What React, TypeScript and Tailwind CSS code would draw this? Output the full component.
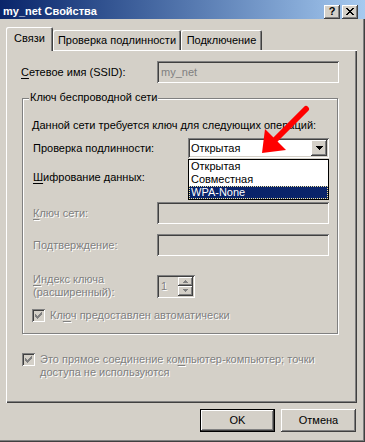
import React from "react";

const raised =
  "shadow-[inset_-1px_-1px_#404040,inset_1px_1px_#fff,inset_-2px_-2px_#808080,inset_2px_2px_#d4d0c8]";
const sunken =
  "shadow-[inset_1px_1px_#808080,inset_-1px_-1px_#fff,inset_2px_2px_#404040,inset_-2px_-2px_#d4d0c8]";
const disabledText = "text-[#808080] [text-shadow:1px_1px_0_#fff]";

function CheckMark({ color }: { color: string }) {
  return (
    <svg width="7" height="7" viewBox="0 0 7 7" shapeRendering="crispEdges">
      <path
        d="M6 0h1v3h-1v1h-1v1h-1v1h-1v1h-1v-1h-1v-1h-1v-3h1v1h1v1h1v-1h1v-1h1z"
        fill={color}
      />
    </svg>
  );
}

function Checkbox() {
  return (
    <div className={`flex h-[13px] w-[13px] shrink-0 items-center justify-center bg-[#d4d0c8] ${sunken}`}>
      <CheckMark color="#808080" />
    </div>
  );
}

function DownArrow({ color = "#000" }: { color?: string }) {
  return (
    <svg width="7" height="4" viewBox="0 0 7 4" shapeRendering="crispEdges">
      <path d="M0 0h7v1h-1v1h-1v1h-1v1h-1v-1h-1v-1h-1v-1h-1z" fill={color} />
    </svg>
  );
}

function Combo({ value }: { value: string }) {
  return (
    <div className={`flex h-[20px] w-[141px] items-center bg-white pl-[3px] pr-[2px] ${sunken}`}>
      <span className="flex-1">{value}</span>
      <div className={`flex h-[16px] w-[16px] items-center justify-center bg-[#d4d0c8] ${raised}`}>
        <DownArrow />
      </div>
    </div>
  );
}

function U({ children }: { children: React.ReactNode }) {
  return <span className="underline decoration-1 underline-offset-[2px]">{children}</span>;
}

export default function App() {
  return (
    <div className="relative h-[442px] w-[365px] overflow-hidden bg-[#d4d0c8] font-['Liberation_Sans',Arial,sans-serif] text-[11px] leading-[13px] text-black shadow-[inset_-1px_-1px_#404040,inset_-2px_-2px_#808080]">
      {/* title bar */}
      <div className="flex h-[19px] items-center bg-gradient-to-r from-[#0a246a] to-[#a6caf0] pl-[3px] pr-[7px] pt-[4px]">
        <span className="flex-1 font-bold text-white">my_net Свойства</span>
        <div className={`flex h-[14px] w-[16px] items-center justify-center bg-[#d4d0c8] font-bold ${raised}`}>
          ?
        </div>
        <div className={`ml-[2px] flex h-[14px] w-[16px] items-center justify-center bg-[#d4d0c8] ${raised}`}>
          <svg width="8" height="7" viewBox="0 0 8 7" shapeRendering="crispEdges">
            <path
              d="M0 0h2v1h1v1h2v-1h1v-1h2v1h-1v1h-1v1h-1v1h1v1h1v1h1v1h-2v-1h-1v-1h-2v1h-1v1h-2v-1h1v-1h1v-1h1v-1h-1v-1h-1v-1h-1z"
              fill="#000"
            />
          </svg>
        </div>
      </div>

      {/* tabs */}
      <div className="ml-[6px] mt-[8px] flex h-[23px] items-end">
        <div className="relative z-10 -mb-[1px] flex h-[24px] w-[47px] items-center justify-center rounded-t-[2px] bg-[#d4d0c8] pb-[2px] shadow-[inset_1px_1px_#fff,inset_-1px_0_#404040,inset_-2px_0_#808080]">
          Связи
        </div>
        <div className="flex h-[20px] w-[128px] items-center justify-center rounded-t-[2px] shadow-[inset_1px_1px_#fff,inset_-1px_0_#404040,inset_-2px_0_#808080]">
          Проверка подлинности
        </div>
        <div className="flex h-[20px] w-[81px] items-center justify-center rounded-t-[2px] shadow-[inset_1px_1px_#fff,inset_-1px_0_#404040,inset_-2px_0_#808080]">
          Подключение
        </div>
      </div>

      {/* tab page */}
      <div className="ml-[6px] flex h-[353px] w-[351px] flex-col pl-[16px] shadow-[inset_1px_1px_#fff,inset_-1px_-1px_#404040,inset_-2px_-2px_#808080]">
        <div className="mt-[11px] flex items-center">
          <span className="-ml-[1px] w-[136px]">
            <U>С</U>етевое имя (SSID):
          </span>
          <div className={`flex h-[22px] w-[182px] items-center bg-[#d4d0c8] pl-[4px] text-[#808080] ${sunken}`}>
            my_net
          </div>
        </div>

        <div className="relative mt-[15px] h-[236px] w-[316px] border border-[#808080] shadow-[1px_1px_0_#fff,inset_1px_1px_0_#fff]">
          <span className="absolute left-[6px] top-[-8px] bg-[#d4d0c8] px-[1px]">Ключ беспроводной сети</span>
          <div className="flex flex-col pl-[10px]">
            <div className="mt-[20px] -ml-[1px] h-[13px]">Данной сети требуется ключ для следующих операций:</div>

            <div className="mt-[6px] flex h-[20px] items-center">
              <span className="w-[155px]">
                Проверка по<U>д</U>линности:
              </span>
              <Combo value="Открытая" />
            </div>

            {/* this combo sits under the open list */}
            <div className="mt-[9px] flex h-[20px] items-center">
              <span className="w-[155px]">
                <U>Ш</U>ифрование данных:
              </span>
              <Combo value="" />
            </div>

            <div className="mt-[15px] flex h-[22px] items-center">
              <span className={`w-[124px] ${disabledText}`}>
                <U>К</U>люч сети:
              </span>
              <div className={`h-[22px] w-[172px] bg-[#d4d0c8] ${sunken}`} />
            </div>

            <div className="mt-[10px] flex h-[22px] items-center">
              <span className={`w-[124px] ${disabledText}`}>
                По<U>д</U>тверждение:
              </span>
              <div className={`h-[22px] w-[172px] bg-[#d4d0c8] ${sunken}`} />
            </div>

            <div className="mt-[17px] flex h-[26px] items-center">
              <span className={`w-[124px] ${disabledText}`}>
                <U>И</U>ндекс ключа
                <br />
                (расширенный):
              </span>
              <div className={`flex h-[23px] w-[38px] items-center bg-[#d4d0c8] pl-[4px] pr-[2px] ${sunken}`}>
                <span className={`flex-1 ${disabledText}`}>1</span>
                <div className="flex flex-col">
                  <div className={`flex h-[9px] w-[15px] items-center justify-center ${raised}`}>
                    <svg width="5" height="3" viewBox="0 0 5 3" shapeRendering="crispEdges">
                      <path d="M2 0h1v1h1v1h1v1h-5v-1h1v-1h1z" fill="#808080" />
                    </svg>
                  </div>
                  <div className={`flex h-[10px] w-[15px] items-center justify-center ${raised}`}>
                    <svg width="5" height="3" viewBox="0 0 5 3" shapeRendering="crispEdges">
                      <path d="M0 0h5v1h-1v1h-1v1h-1v-1h-1v-1h-1z" fill="#808080" />
                    </svg>
                  </div>
                </div>
              </div>
            </div>

            <div className="mt-[10px] flex h-[13px] items-center -ml-[1px]">
              <Checkbox />
              <span className={`ml-[5px] ${disabledText}`}>
                Кл<U>ю</U>ч предоставлен автоматически
              </span>
            </div>
          </div>
        </div>

        <div className="mt-[19px] flex items-start">
          <Checkbox />
          <span className={`ml-[5px] ${disabledText}`}>
            Это прямое соединение ко<U>м</U>пьютер-компьютер; точки
            <br />
            доступа не используются
          </span>
        </div>
      </div>

      {/* buttons */}
      <div className="mt-[6px] flex justify-end gap-[6px] pr-[9px]">
        <div className="h-[23px] w-[75px] border border-black">
          <div className={`flex h-full w-full items-center justify-center ${raised}`}>OK</div>
        </div>
        <div className={`flex h-[23px] w-[75px] items-center justify-center ${raised}`}>Отмена</div>
      </div>

      {/* open dropdown list */}
      <div className="absolute left-[188px] top-[159px] flex w-[141px] flex-col border border-black bg-white">
        <div className="h-[13px] pl-[2px]">Открытая</div>
        <div className="h-[13px] pl-[2px]">Совместная</div>
        <div className="h-[13px] bg-[#0a246a] pl-[2px] text-white outline-1 -outline-offset-1 outline-dotted outline-[#f5e79e]">
          WPA-None
        </div>
      </div>

      {/* red annotation arrow */}
      <svg className="absolute left-[258px] top-[104px]" width="52" height="52" viewBox="0 0 52 52">
        <line x1="16" y1="37" x2="48" y2="5" stroke="#f00" strokeWidth="6" strokeLinecap="round" />
        <polygon points="4,49 7,25 28,46" fill="#f00" />
      </svg>
    </div>
  );
}
